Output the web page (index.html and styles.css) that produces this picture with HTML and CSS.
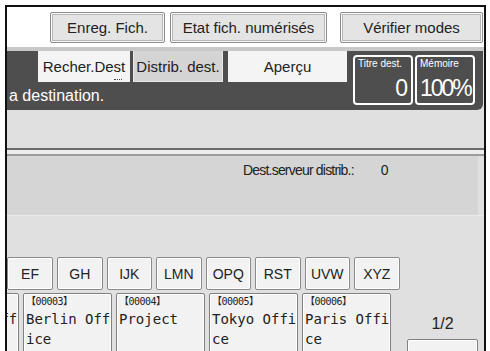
FILE: index.html
```html
<!DOCTYPE html>
<html lang="fr">
<head>
    <meta charset="UTF-8">
    <meta name="viewport" content="width=device-width, initial-scale=1.0">
    <title>Distrib. dest.</title>
    <link rel="stylesheet" href="styles.css">
</head>
<body>
    <div class="screen">
        <div class="topbar">
            <div class="btn-top btn-save">Enreg. Fich.</div>
            <div class="btn-top btn-state">Etat fich. numérisés</div>
            <div class="btn-top btn-modes">Vérifier modes</div>
        </div>
        <div class="strip"></div>

        <div class="band">
            <div class="band-main">
                <div class="tabs">
                    <div class="tab tab-search">Recher.Dest</div>
                    <div class="tab tab-on">Distrib. dest.</div>
                    <div class="tab tab-preview">Aperçu</div>
                </div>
                <div class="message">a destination.</div>
            </div>
            <div class="counter">
                <div class="counter-label">Titre dest.</div>
                <div class="counter-value">0</div>
            </div>
            <div class="counter">
                <div class="counter-label">Mémoire</div>
                <div class="counter-value">100%</div>
            </div>
        </div>

        <div class="blank"></div>
        <div class="divider"></div>

        <div class="panel">
            <span>Dest.serveur distrib.:</span>
            <span class="count">0</span>
        </div>

        <div class="gap"></div>

        <div class="letters">
            <div class="letter">EF</div>
            <div class="letter">GH</div>
            <div class="letter">IJK</div>
            <div class="letter">LMN</div>
            <div class="letter">OPQ</div>
            <div class="letter">RST</div>
            <div class="letter">UVW</div>
            <div class="letter">XYZ</div>
        </div>

        <div class="dest-row">
            <div class="dest-list">
                <div class="dest">
                    <div class="code">【00002】</div>
                    <div class="name">London Off<br>ice</div>
                </div>
                <div class="dest">
                    <div class="code">【00003】</div>
                    <div class="name">Berlin Off<br>ice</div>
                </div>
                <div class="dest">
                    <div class="code">【00004】</div>
                    <div class="name">Project</div>
                </div>
                <div class="dest">
                    <div class="code">【00005】</div>
                    <div class="name">Tokyo Offi<br>ce</div>
                </div>
                <div class="dest">
                    <div class="code">【00006】</div>
                    <div class="name">Paris Offi<br>ce</div>
                </div>
            </div>
            <div class="pager">
                <div class="page-num">1/2</div>
                <div class="page-btn"></div>
            </div>
        </div>
    </div>
</body>
</html>
```

FILE: styles.css
```css
* {
    box-sizing: border-box;
}
body {
    margin: 0;
    background: #fff;
    font-family: "Liberation Sans", Arial, sans-serif;
    color: #222;
}
.screen {
    margin: 5px 0 0 5px;
    width: 481px;
    height: 346px;
    border: 2px solid #111;
    border-bottom: none;
    overflow: hidden;
    background: #e0e0e0;
}

/* top buttons */
.topbar {
    height: 40px;
    background: #fff;
    display: flex;
    padding: 5px 0 0 43px;
}
.btn-top {
    height: 31px;
    display: flex;
    align-items: center;
    justify-content: center;
    font-size: 15px;
    background: #e4e4e4;
    border: 1px solid #8c8c8c;
    border-radius: 2px;
    box-shadow: inset 0 0 0 1px #fafafa, inset 0 0 0 2px #b8b8b8;
}
.btn-save {
    width: 115px;
    margin-right: 5px;
}
.btn-state {
    width: 157px;
    margin-right: 13px;
}
.btn-modes {
    width: 143px;
}
.strip {
    height: 4px;
    background: #c8c8c8;
}

/* dark band */
.band {
    height: 59px;
    margin-right: 1px;
    background: #4e4e4e;
    border-bottom-right-radius: 6px;
    display: flex;
}
.band-main {
    flex: 0 0 346px;
}
.tabs {
    display: flex;
    height: 31px;
    padding-left: 31px;
}
.tab {
    height: 31px;
    display: flex;
    align-items: center;
    justify-content: center;
    font-size: 15px;
    background: #f4f4f4;
}
.tab-search {
    width: 92px;
    margin-right: 3px;
    position: relative;
}
.tab-search::after {
    content: "";
    position: absolute;
    right: 8px;
    bottom: 2px;
    width: 8px;
    border-bottom: 1px dotted #444;
}
.tab-on {
    width: 90px;
    margin-right: 5px;
    background: #d4d4d4;
    border: 1px solid #e8e8e8;
    border-top: none;
}
.tab-preview {
    width: 119px;
}
.message {
    color: #fff;
    font-size: 16px;
    line-height: 28px;
    padding-left: 2px;
}
.counter {
    width: 60px;
    height: 50px;
    margin: 4px 2px 0 0;
    border: 2px solid #fff;
    border-radius: 4px;
    color: #fff;
    padding: 1px 3px 0 3px;
    display: flex;
    flex-direction: column;
}
.counter-label {
    font-size: 10px;
    line-height: 12px;
}
.counter-value {
    margin-top: auto;
    text-align: right;
    font-size: 23px;
    line-height: 29px;
    letter-spacing: -2px;
    padding-right: 2px;
}

/* middle area */
.blank {
    height: 38px;
}
.divider {
    height: 8px;
    background: #ececec;
    border-top: 2px solid #6c6c6c;
    border-bottom: 2px solid #9c9c9c;
}
.panel {
    height: 59px;
    margin-right: 6px;
    background: #d5d5d5;
    padding: 4px 0 0 236px;
    display: flex;
    font-size: 14px;
    line-height: 20px;
    letter-spacing: -0.8px;
}
.count {
    margin-left: 27px;
}
.gap {
    height: 42px;
    border-top: 1px solid #ebebeb;
}

/* letter tabs */
.letters {
    display: flex;
    gap: 4px;
    height: 33px;
}
.letter {
    flex: 0 0 45.5px;
    display: flex;
    align-items: center;
    justify-content: center;
    font-size: 14px;
    background: #f2f2f2;
    border: 1px solid #8a8a8a;
    border-radius: 2px;
    box-shadow: inset 0 0 0 1px #fff;
}
.letter:first-child {
    flex-basis: 46px;
}

/* destination list */
.dest-row {
    display: flex;
    margin-top: 3px;
    height: 58px;
}
.dest-list {
    flex: 0 0 384px;
    display: flex;
    gap: 4px;
    overflow: hidden;
}
.dest {
    flex: none;
    width: 89px;
    height: 62px;
    padding: 0 2px;
    background: #f2f2f2;
    border: 1px solid #808080;
    border-radius: 2px;
    box-shadow: inset 0 0 0 1px #fff;
    white-space: nowrap;
    overflow: hidden;
}
.dest:first-child {
    margin-left: -77px;
}
.code {
    font-family: "DejaVu Sans Mono", "Noto Sans CJK JP", monospace;
    font-size: 10px;
    line-height: 15px;
    letter-spacing: -0.5px;
}
.name {
    font-family: "DejaVu Sans Mono", monospace;
    font-size: 14px;
    line-height: 20px;
}
.pager {
    flex: 1;
    padding-left: 16px;
}
.page-num {
    width: 71px;
    margin-top: 22px;
    text-align: center;
    font-size: 16px;
    line-height: 18px;
}
.page-btn {
    width: 71px;
    height: 30px;
    margin-top: 6px;
    background: #f2f2f2;
    border: 1px solid #808080;
    border-radius: 2px;
    box-shadow: inset 0 0 0 1px #fff;
}
```
